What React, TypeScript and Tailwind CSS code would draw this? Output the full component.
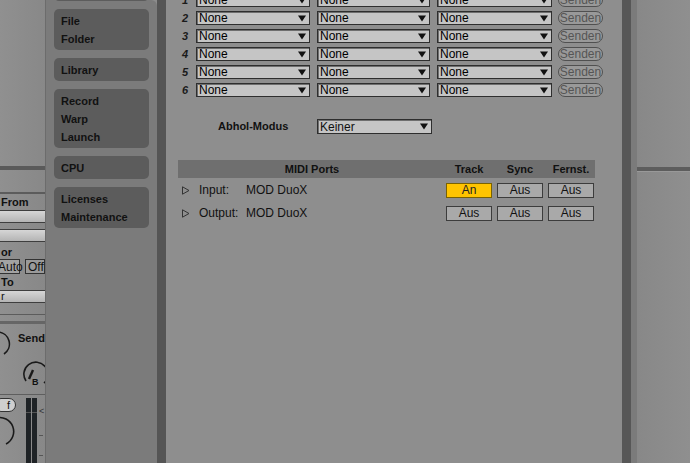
import type { ReactNode } from "react";

const font = "font-['Liberation_Sans',Arial,sans-serif]";

const navGroups: string[][] = [
  ["File", "Folder"],
  ["Library"],
  ["Record", "Warp", "Launch"],
  ["CPU"],
  ["Licenses", "Maintenance"],
];

const slots = [1, 2, 3, 4, 5, 6];

function Arrow() {
  return (
    <svg width="8" height="7" viewBox="0 0 8 7" className="shrink-0">
      <path d="M0 0.5h8L4 6.5z" fill="#111" />
    </svg>
  );
}

function Select({ value, width }: { value: string; width: string }) {
  return (
    <div
      className={`flex h-[14px] ${width} items-center justify-between border border-[#2e2e2e] bg-[#c5c5c5] pl-[2px] pr-[3px] text-[12px] leading-none text-black shadow-[inset_1px_1px_0_#6e6e6e]`}
    >
      <span>{value}</span>
      <Arrow />
    </div>
  );
}

function Toggle({ label, on }: { label: string; on?: boolean }) {
  return (
    <div
      className={`flex h-[15px] w-[46px] items-center justify-center border text-[12px] leading-none ${
        on ? "border-[#7a6200] bg-[#ffc400] text-[#222]" : "border-[#3c3c3c] bg-[#a9a9a9] text-[#111]"
      }`}
    >
      {label}
    </div>
  );
}

function NavBox({ items }: { items: string[] }) {
  return (
    <div className="flex flex-col gap-[4px] rounded-[5px] bg-[#5c5c5c] px-[7px] pb-[4px] pt-[5px]">
      {items.map((i) => (
        <div key={i} className="h-[14px] text-[11px] font-bold leading-[14px] text-[#111]">
          {i}
        </div>
      ))}
    </div>
  );
}

function Field({ children }: { children?: ReactNode }) {
  return (
    <div className="flex h-[13px] items-center border-y border-[#3e3e3e] bg-gradient-to-b from-[#d6d6d6] to-[#b4b4b4] text-[11px] leading-none text-[#111]">
      {children}
    </div>
  );
}

// clipped strip of the track view sitting behind the preferences window
function TrackStrip() {
  return (
    <div className="flex w-[46px] shrink-0 flex-col overflow-hidden border-r border-[#6c6c6c] bg-gradient-to-r from-[#909090] to-[#888] text-[11px] text-[#111]">
      <div className="h-[166px] shrink-0" />
      <div className="h-[4px] shrink-0 bg-[#5a5a5a]" />
      <div className="h-[22px] shrink-0" />
      <div className="h-[2px] shrink-0 bg-[#5c5c5c]" />
      <div className="h-[16px] shrink-0 pl-[1px] font-bold leading-[16px]">From</div>
      <Field />
      <div className="h-[6px] shrink-0" />
      <Field />
      <div className="h-[3px] shrink-0" />
      <div className="h-[14px] shrink-0 pl-[1px] font-bold leading-[14px]">or</div>
      <div className="flex h-[15px] shrink-0 gap-[5px] text-[12px]">
        <div className="-ml-[3px] flex w-[23px] items-center border border-[#333] bg-[#a3a3a3] leading-none">Auto</div>
        <div className="flex w-[22px] items-center border border-[#333] bg-[#9a9a9a] pl-[2px] leading-none">Off</div>
      </div>
      <div className="h-[16px] shrink-0 pl-[1px] font-bold leading-[16px]">To</div>
      <Field>
        <span className="pl-[1px]">r</span>
      </Field>
      <div className="h-[11px] shrink-0" />
      <div className="h-px shrink-0 bg-[#5c5c5c]" />
      <div className="h-[6px] shrink-0" />
      <div className="h-[3px] shrink-0 bg-[#666]" />
      <div className="relative h-[70px] shrink-0">
        <svg width="46" height="70" viewBox="0 0 46 70" className="block">
          <path d="M-2 8a12 12 0 0 1 6 22" fill="none" stroke="#1a1a1a" strokeWidth="1.6" />
          <path d="M26 57a12 12 0 1 1 18 2" fill="none" stroke="#1a1a1a" strokeWidth="1.6" />
          <path d="M33 46l-4 9" stroke="#1a1a1a" strokeWidth="2.4" />
        </svg>
        <span className="absolute left-[18px] top-[9px] font-bold leading-none">Send</span>
        <span className="absolute left-[32px] top-[54px] text-[9px] font-bold leading-none">B</span>
      </div>
      <div className="h-px shrink-0 bg-[#5e5e5e]" />
      <div className="flex flex-1 gap-[10px] pt-[3px]">
        <div className="flex w-[16px] flex-col">
          <div className="-ml-[6px] flex h-[14px] w-[22px] items-center justify-end rounded-full border border-[#333] bg-[#cfcfcf] pr-[5px] leading-none">
            f
          </div>
          <svg width="16" height="40" viewBox="0 0 16 40" className="mt-[4px] block">
            <path d="M-4 2a14 14 0 0 1 10 26" fill="none" stroke="#1a1a1a" strokeWidth="1.6" />
          </svg>
        </div>
        <div className="flex gap-px">
          <div className="flex w-[5px] flex-col bg-[#1f2326]">
            <div className="mt-[14px] h-px bg-[#555]" />
          </div>
          <div className="flex w-[5px] flex-col bg-[#1f2326]">
            <div className="mt-[14px] h-px bg-[#555]" />
          </div>
        </div>
        <div className="-ml-[8px] flex flex-col gap-[19px] pt-[9px] text-[9px] leading-none text-[#333]">
          <span>&lt;</span>
          <div className="h-px w-[4px] bg-[#555]" />
          <div className="h-px w-[4px] bg-[#555]" />
        </div>
      </div>
    </div>
  );
}

export default function App() {
  return (
    <div className={`flex h-[463px] w-[690px] overflow-hidden bg-[#8c8c8c] ${font}`}>
      <TrackStrip />

      {/* preferences tab column */}
      <aside className="flex w-[111px] shrink-0 flex-col gap-[8px] rounded-tr-[6px] bg-[#7b7b7b] pl-[8px] pr-[8px]">
        <div className="-mt-[20px] h-[21px] rounded-[5px] bg-[#5c5c5c]" />
        {navGroups.map((g) => (
          <NavBox key={g[0]} items={g} />
        ))}
      </aside>
      <div className="w-[9px] shrink-0 bg-[#555]" />

      {/* preferences content */}
      <main className="flex w-[456px] shrink-0 flex-col bg-[#8e8e8e] pl-[12px] text-[#111]">
        <div className="-mt-[9px] flex flex-col">
          {slots.map((n) => (
            <div key={n} className="flex h-[18px] items-center">
              <span className="w-[10px] text-right text-[11px] font-bold italic leading-none text-[#1a1a1a]">{n}</span>
              <div className="ml-[8px] flex items-center gap-[7px]">
                <Select value="None" width="w-[114px]" />
                <Select value="None" width="w-[113px]" />
                <Select value="None" width="w-[115px]" />
              </div>
              <div className="ml-[6px] flex h-[14px] w-[45px] items-center justify-center rounded-full border border-[#505050] bg-[#999] text-[12px] leading-none text-[#555]">
                Senden
              </div>
            </div>
          ))}
        </div>

        <div className="mt-[20px] flex h-[15px] items-center">
          <span className="ml-[40px] w-[88px] text-[11px] font-bold leading-none">Abhol-Modus</span>
          <div className="ml-[11px] flex h-[15px] w-[115px] items-center justify-between border border-[#2e2e2e] bg-[#c5c5c5] pl-[2px] pr-[3px] text-[12px] leading-none shadow-[inset_1px_1px_0_#6e6e6e]">
            <span>Keiner</span>
            <Arrow />
          </div>
        </div>

        <div className="mt-[26px] flex w-[417px] flex-col">
          <div className="flex h-[18px] items-center bg-[#6f6f6f] text-[11px] font-bold leading-none">
            <span className="w-[268px] text-center">MIDI Ports</span>
            <span className="w-[46px] text-center">Track</span>
            <span className="ml-[5px] w-[46px] text-center">Sync</span>
            <span className="ml-[5px] w-[46px] text-center">Fernst.</span>
          </div>

          {[
            { dir: "Input:", name: "MOD DuoX", track: true },
            { dir: "Output:", name: "MOD DuoX", track: false },
          ].map((p, i) => (
            <div key={p.dir} className={`flex h-[16px] items-center text-[12px] leading-none ${i === 0 ? "mt-[4px]" : "mt-[7px]"}`}>
              <svg width="8" height="9" viewBox="0 0 8 9" className="ml-[4px] shrink-0">
                <path d="M0.5 0.8L7 4.5L0.5 8.2z" fill="none" stroke="#333" strokeWidth="1" />
              </svg>
              <span className="ml-[9px] w-[47px] whitespace-nowrap">{p.dir}</span>
              <span className="w-[200px]">{p.name}</span>
              <Toggle label={p.track ? "An" : "Aus"} on={p.track} />
              <div className="ml-[5px]">
                <Toggle label="Aus" />
              </div>
              <div className="ml-[5px]">
                <Toggle label="Aus" />
              </div>
            </div>
          ))}
        </div>
      </main>

      <div className="w-[9px] shrink-0 bg-[#575757]" />
      <div className="w-[6px] shrink-0 bg-[#7b7b7b]" />

      {/* window behind, right side */}
      <div className="flex flex-1 flex-col bg-gradient-to-r from-[#888] to-[#8f8f8f]">
        <div className="h-[167px] shrink-0" />
        <div className="h-[4px] shrink-0 bg-[#5d5d5d]" />
        <div className="h-px shrink-0 bg-[#999]" />
      </div>
    </div>
  );
}
